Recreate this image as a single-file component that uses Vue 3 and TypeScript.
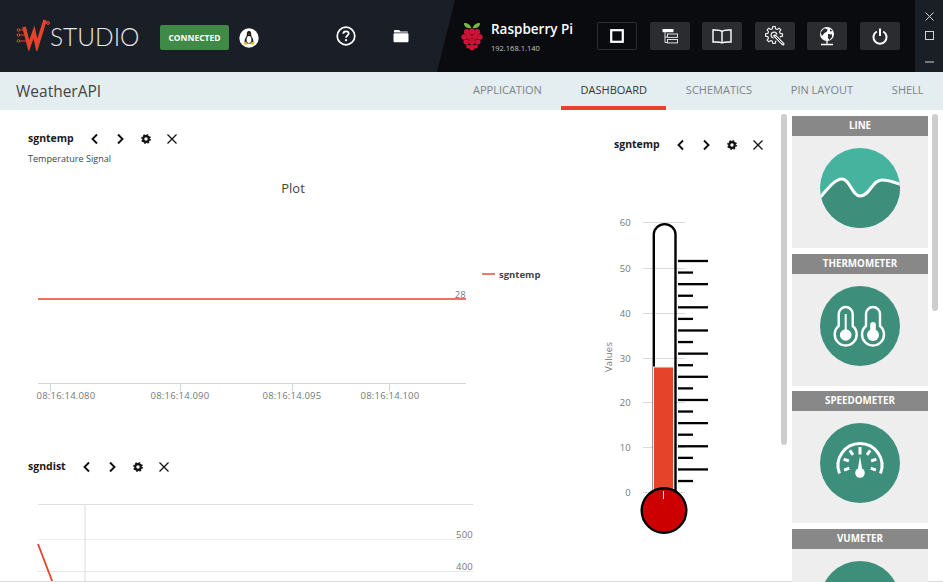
<script setup lang="ts">
// top bar + tabs
const tabs: string[] = ['APPLICATION', 'DASHBOARD', 'SCHEMATICS', 'PIN LAYOUT', 'SHELL']
const activeTab = 'DASHBOARD'

// chart data, coords are page coords (viewBox starts at the svg's page offset)
const timeTicks = [
  { x: 50, tx: 66, label: '08:16:14.080' },
  { x: 180, tx: 180, label: '08:16:14.090' },
  { x: 292, tx: 292, label: '08:16:14.095' },
  { x: 389, tx: 390, label: '08:16:14.100' },
]
const thermoScale = [
  { y: 222, label: '60' },
  { y: 268, label: '50' },
  { y: 313, label: '40' },
  { y: 358, label: '30' },
  { y: 402, label: '20' },
  { y: 447, label: '10' },
  { y: 492, label: '0' },
]
const thermoMarks: { y: number; x2: number }[] = Array.from({ length: 20 }, (_, i) => ({
  y: 261 + i * 11.58,
  x2: i % 2 === 0 ? 708 : 693,
}))

const palette: string[] = ['LINE', 'THERMOMETER', 'SPEEDOMETER', 'VUMETER']
const gaugeTicks: number[] = [-111, -74, -37, 0, 37, 74, 111]

// outline of a cog, used by the settings button
function cogPath(cx: number, cy: number, outer: number, inner: number, teeth: number): string {
  const step = (Math.PI * 2) / teeth
  const pts: string[] = []
  for (let i = 0; i < teeth; i++) {
    const a = i * step
    const offsets: [number, number][] = [
      [-0.32, inner],
      [-0.18, outer],
      [0.18, outer],
      [0.32, inner],
    ]
    for (const [o, r] of offsets) {
      const t = a + o * step
      pts.push(`${(cx + Math.cos(t) * r).toFixed(2)} ${(cy + Math.sin(t) * r).toFixed(2)}`)
    }
  }
  return `M${pts.join('L')}Z`
}
const settingsCog: string = cogPath(9, 9, 8.6, 6.4, 8)
</script>

<template>
  <div class="app">
    <svg class="sprites" width="0" height="0" aria-hidden="true">
      <symbol id="ico-prev" viewBox="0 0 12 12">
        <path d="M8 1.500 3.500 6 8 10.500" fill="none" stroke="#111" stroke-width="1.900" />
      </symbol>
      <symbol id="ico-next" viewBox="0 0 12 12">
        <path d="M4 1.500 8.500 6 4 10.500" fill="none" stroke="#111" stroke-width="1.900" />
      </symbol>
      <symbol id="ico-gear" viewBox="0 0 12 12">
        <circle cx="6" cy="6" r="2.800" fill="none" stroke="#111" stroke-width="2.200" />
        <circle cx="6" cy="6" r="4.200" fill="none" stroke="#111" stroke-width="1.500" stroke-dasharray="1.650 1.650" />
      </symbol>
      <symbol id="ico-close" viewBox="0 0 12 12">
        <path d="M1.500 1.500 10.500 10.500M10.500 1.500 1.500 10.500" fill="none" stroke="#111" stroke-width="1.300" />
      </symbol>
    </svg>

    <header class="topbar">
      <div class="topbar-left">
        <div class="brand">
          <svg class="brand-mark" width="34" height="34" viewBox="0 0 34 34">
            <path d="M8 10 13 29 18 15 21 29 29 3" fill="none" stroke="#e5432a" stroke-width="3.600" />
            <path d="M29 6H33M11 13H3M12 18H3M13 24H3" fill="none" stroke="#e5432a" stroke-width="1" />
            <circle cx="2.500" cy="13" r="1.300" fill="none" stroke="#e5432a" />
            <circle cx="2.500" cy="18" r="1.300" fill="none" stroke="#e5432a" />
            <circle cx="2.500" cy="24" r="1.300" fill="none" stroke="#e5432a" />
            <circle cx="32" cy="6" r="1.500" fill="none" stroke="#e5432a" />
          </svg>
          <span class="brand-name">STUDIO</span>
        </div>
        <span class="status">CONNECTED</span>
        <svg class="os-icon" width="20" height="20" viewBox="0 0 20 20">
          <circle cx="10" cy="10" r="9.700" fill="#fff" />
          <path d="M10 3C8 3 7.800 5 7.800 7 7.800 8.500 5.500 10.500 5.500 13.500L7 15.500H13L14.500 13.500C14.500 10.500 12.200 8.500 12.200 7 12.200 5 12 3 10 3Z" fill="#16181c" />
          <ellipse cx="10" cy="11.500" rx="2.400" ry="3.500" fill="#fff" />
          <path d="M4.500 14.500 7.500 13.500 8 16.500 5.500 16.800ZM15.500 14.500 12.500 13.500 12 16.500 14.500 16.800ZM9 5.800H11L10 6.800Z" fill="#f2b90f" />
        </svg>
        <svg class="help-icon" width="20" height="20" viewBox="0 0 20 20">
          <circle cx="10" cy="10" r="8.800" fill="none" stroke="#fff" stroke-width="1.700" />
          <path d="M7.300 7.800C7.300 6.200 8.500 5.400 10 5.400 11.600 5.400 12.700 6.300 12.700 7.600 12.700 9.500 10 9.500 10 11.700" fill="none" stroke="#fff" stroke-width="1.700" />
          <circle cx="10" cy="14.200" r="1.100" fill="#fff" />
        </svg>
        <svg class="folder-icon" width="16" height="14" viewBox="0 0 16 14">
          <path d="M1 3.500V2C1 1.400 1.400 1 2 1H6L7.500 2.500H14C14.600 2.500 15 2.900 15 3.500Z" fill="#fff" />
          <rect x="0.500" y="4.200" width="15" height="9" rx="1.200" fill="#fff" />
        </svg>
      </div>

      <div class="topbar-right">
        <svg class="board-logo" width="22" height="29" viewBox="0 0 22 29">
          <path d="M10.500 6C8 1 4 .5 3 1.500 3 4.500 6 7 10.500 6ZM11.500 6C14 1 18 .5 19 1.500 19 4.500 16 7 11.500 6Z" fill="#7ab648" />
          <g fill="#d01237">
            <circle cx="11" cy="9.500" r="3" />
            <circle cx="5.800" cy="10" r="2.900" />
            <circle cx="16.200" cy="10" r="2.900" />
            <circle cx="3" cy="15" r="2.700" />
            <circle cx="19" cy="15" r="2.700" />
            <circle cx="8" cy="14.700" r="3" />
            <circle cx="14" cy="14.700" r="3" />
            <circle cx="11" cy="19.800" r="3" />
            <circle cx="5.300" cy="20" r="2.800" />
            <circle cx="16.700" cy="20" r="2.800" />
            <circle cx="11" cy="25.400" r="2.900" />
            <circle cx="7" cy="24.500" r="2" />
            <circle cx="15" cy="24.500" r="2" />
          </g>
        </svg>
        <div class="board-info">
          <span class="board-name">Raspberry Pi</span>
          <span class="board-ip">192.168.1.140</span>
        </div>
        <div class="actions">
          <button type="button" class="action action-stop" aria-label="Stop">
            <svg width="14" height="14" viewBox="0 0 14 14">
              <rect x="1.200" y="1.200" width="11.600" height="11.600" fill="none" stroke="#fff" stroke-width="2.200" />
            </svg>
          </button>
          <button type="button" class="action" aria-label="Tree">
            <svg width="16" height="15" viewBox="0 0 16 15">
              <rect x="0.500" y="0" width="11" height="3.200" fill="#fff" />
              <path d="M3 3V13.500H5M3 8H5" fill="none" stroke="#ddd" />
              <rect x="5.500" y="5" width="10" height="3.400" fill="none" stroke="#ddd" />
              <rect x="5.500" y="10.500" width="10" height="3.400" fill="none" stroke="#ddd" />
            </svg>
          </button>
          <button type="button" class="action" aria-label="Book">
            <svg width="20" height="15" viewBox="0 0 20 15">
              <path d="M10 2.500C8.500 1 5 .8 1 1V13C5 12.800 8.500 13 10 14 11.500 13 15 12.800 19 13V1C15 .8 11.500 1 10 2.500ZM10 2.500V14" fill="none" stroke="#fff" stroke-width="1.400" />
            </svg>
          </button>
          <button type="button" class="action" aria-label="Settings">
            <svg width="20" height="20" viewBox="0 0 20 20">
              <path :d="settingsCog" fill="none" stroke="#eee" stroke-width="1.200" stroke-linejoin="round" />
              <circle cx="9" cy="9" r="2.900" fill="none" stroke="#eee" stroke-width="1.200" />
              <path d="M10 10 17.500 17.500" stroke="#2a2c2f" stroke-width="5.200" />
              <path d="M9.800 9.800 18 18" stroke="#eee" stroke-width="3" stroke-linecap="round" />
              <path d="M10.500 10.500 17.500 17.500" stroke="#2a2c2f" stroke-width="1" />
            </svg>
          </button>
          <button type="button" class="action" aria-label="Network">
            <svg width="18" height="20" viewBox="0 0 18 20">
              <circle cx="9" cy="8" r="7" fill="#fff" />
              <path d="M6 2.500 9.500 3 9 5.500 6.500 7 4 10 2.500 6.500ZM10 8 14 8.500 14 11 11.500 14 10 12ZM12 3 14.500 5 12 5.500Z" fill="#2a2c2f" />
              <path d="M9 15V17.500M3 18.500H15" stroke="#fff" stroke-width="1.400" fill="none" />
            </svg>
          </button>
          <button type="button" class="action" aria-label="Power">
            <svg width="16" height="17" viewBox="0 0 16 17">
              <path d="M4.800 3.500A6.500 6.500 0 1 0 11.200 3.500M8 .5V8" fill="none" stroke="#fff" stroke-width="2" />
            </svg>
          </button>
        </div>
      </div>

      <div class="window-controls">
        <svg width="9" height="9" viewBox="0 0 9 9"><path d="M.5 .5 8.500 8.500M8.500 .5 .5 8.500" stroke="#cfd2d6" fill="none" /></svg>
        <svg width="9" height="9" viewBox="0 0 9 9"><rect x=".5" y=".5" width="8" height="8" stroke="#cfd2d6" fill="none" /></svg>
        <svg width="9" height="9" viewBox="0 0 9 9"><path d="M0 8H9" stroke="#cfd2d6" fill="none" /></svg>
      </div>
    </header>

    <nav class="tabbar">
      <span class="project">WeatherAPI</span>
      <ul class="tabs" role="list">
        <li v-for="tab in tabs" :key="tab" :class="['tab', { active: tab === activeTab }]">{{ tab }}</li>
      </ul>
    </nav>

    <main class="workspace">
      <section class="col-charts">
        <div class="widget-head head-temp">
          <span class="widget-title">sgntemp</span>
          <span class="tool"><svg width="12" height="12"><use href="#ico-prev" /></svg></span>
          <span class="tool"><svg width="12" height="12"><use href="#ico-next" /></svg></span>
          <span class="tool"><svg width="12" height="12"><use href="#ico-gear" /></svg></span>
          <span class="tool"><svg width="12" height="12"><use href="#ico-close" /></svg></span>
        </div>
        <p class="widget-sub">Temperature Signal</p>
        <svg class="plot plot-temp" width="590" height="270" viewBox="0 170 590 270">
          <text x="293" y="193" class="plot-title" text-anchor="middle">Plot</text>
          <line x1="38" y1="299" x2="466" y2="299" stroke="#e5432a" stroke-width="1.600" />
          <text x="466" y="298" class="tick" text-anchor="end">28</text>
          <line x1="482" y1="274" x2="495" y2="274" stroke="#e5432a" stroke-width="1.400" />
          <text x="499" y="277.500" class="legend">sgntemp</text>
          <line x1="38" y1="383.500" x2="466" y2="383.500" stroke="#c9d6e4" />
          <g v-for="t in timeTicks" :key="t.label">
            <line :x1="t.x + 0.5" y1="383" :x2="t.x + 0.5" y2="391" stroke="#c9d6e4" />
            <text :x="t.tx" y="398.500" class="tick" text-anchor="middle">{{ t.label }}</text>
          </g>
        </svg>

        <div class="widget-head head-dist">
          <span class="widget-title">sgndist</span>
          <span class="tool"><svg width="12" height="12"><use href="#ico-prev" /></svg></span>
          <span class="tool"><svg width="12" height="12"><use href="#ico-next" /></svg></span>
          <span class="tool"><svg width="12" height="12"><use href="#ico-gear" /></svg></span>
          <span class="tool"><svg width="12" height="12"><use href="#ico-close" /></svg></span>
        </div>
        <svg class="plot plot-dist" width="590" height="92" viewBox="0 490 590 92">
          <line x1="38" y1="504.500" x2="473" y2="504.500" stroke="#dcdfe3" />
          <line x1="38" y1="539.500" x2="473" y2="539.500" stroke="#eceeef" />
          <line x1="38" y1="571.500" x2="473" y2="571.500" stroke="#e6e8ea" />
          <line x1="85" y1="504" x2="85" y2="582" stroke="#e3e4e6" stroke-width="1.300" />
          <line x1="38" y1="544" x2="52.500" y2="582" stroke="#e5432a" stroke-width="1.800" />
          <text x="473" y="537.500" class="tick" text-anchor="end">500</text>
          <text x="473" y="570" class="tick" text-anchor="end">400</text>
        </svg>
      </section>

      <section class="col-thermo">
        <div class="widget-head head-thermo">
          <span class="widget-title">sgntemp</span>
          <span class="tool"><svg width="12" height="12"><use href="#ico-prev" /></svg></span>
          <span class="tool"><svg width="12" height="12"><use href="#ico-next" /></svg></span>
          <span class="tool"><svg width="12" height="12"><use href="#ico-gear" /></svg></span>
          <span class="tool"><svg width="12" height="12"><use href="#ico-close" /></svg></span>
        </div>
        <svg class="plot plot-thermo" width="190" height="340" viewBox="590 205 190 340">
          <g v-for="s in thermoScale" :key="s.label">
            <line x1="643" :y1="s.y + 0.5" x2="685" :y2="s.y + 0.5" stroke="#dadada" />
            <text x="631" :y="s.y + 3.500" class="tick" text-anchor="end">{{ s.label }}</text>
          </g>
          <text class="tick" transform="translate(612 357) rotate(-90)" text-anchor="middle">Values</text>
          <path d="M653.800 492V234A10.900 10.900 0 0 1 675.500 234V492" fill="none" stroke="#000" stroke-width="2.400" />
          <rect x="653.500" y="367" width="20" height="125" fill="#e5432a" stroke="#f2f2f2" stroke-width="1" />
          <circle cx="664" cy="510.500" r="22.300" fill="#cc0000" stroke="#000" stroke-width="2.400" />
          <line x1="663.500" y1="491" x2="663.500" y2="499" stroke="#eee" />
          <line v-for="m in thermoMarks" :key="m.y" x1="678" :y1="m.y" :x2="m.x2" :y2="m.y" stroke="#000" stroke-width="2.300" />
        </svg>
      </section>

      <div class="scrollbar scroll-dash"></div>

      <aside class="palette">
        <article v-for="item in palette" :key="item" class="card">
          <h3 class="card-head">{{ item }}</h3>
          <div class="card-body">
            <svg width="80" height="80" viewBox="0 0 80 80">
              <defs>
                <clipPath id="disc"><circle cx="40" cy="40" r="40" /></clipPath>
              </defs>
              <template v-if="item === 'LINE'">
                <g clip-path="url(#disc)">
                  <rect width="80" height="80" fill="#45b39d" />
                  <path d="M-2 52C8 40 15 31 22 31 30 31 32 48 40 48 50 48 52 32 62 32 68 32 74 34 82 37V84H-2Z" fill="#3d8f7c" stroke="#fff" stroke-width="3" />
                </g>
              </template>
              <template v-else>
                <circle cx="40" cy="40" r="40" fill="#3d8f7c" />
                <g v-if="item === 'THERMOMETER'">
                  <path d="M18.700 40V28A7 7 0 0 1 32.700 28V40A11 11 0 1 1 18.700 40Z" fill="none" stroke="#fff" stroke-width="2.400" />
                  <circle cx="25.700" cy="49" r="5.800" fill="#fff" />
                  <rect x="24.700" y="28" width="2" height="20" fill="#fff" />
                  <path d="M46 40V28A7 7 0 0 1 60 28V40A11 11 0 1 1 46 40Z" fill="none" stroke="#fff" stroke-width="2.400" />
                  <circle cx="53" cy="49" r="6" fill="#fff" />
                  <rect x="50.200" y="36" width="5.600" height="14" rx="2.800" fill="#fff" />
                </g>
                <g v-else-if="item === 'SPEEDOMETER'">
                  <path d="M19.500 50.500A22 22 0 1 1 60.500 50.500" fill="none" stroke="#fff" stroke-width="3" />
                  <line
                    v-for="a in gaugeTicks"
                    :key="a"
                    x1="40"
                    y1="24"
                    :y2="a === 0 ? 31.500 : 29.500"
                    x2="40"
                    stroke="#fff"
                    stroke-width="3"
                    :transform="`rotate(${a} 40 41)`"
                  />
                  <path d="M40 33 42.300 47H37.700Z" fill="#fff" />
                  <circle cx="40" cy="50" r="4.800" fill="#fff" />
                </g>
              </template>
            </svg>
          </div>
        </article>
      </aside>

      <div class="scrollbar scroll-palette"></div>
    </main>
  </div>
</template>

<style scoped>
.sprites {
  position: absolute;
}

.app {
  width: 943px;
  height: 582px;
  overflow: hidden;
  display: flex;
  flex-direction: column;
  background: #fff;
  font-family: 'Open Sans', 'Noto Sans', sans-serif;
  color: #222;
}

/* top bar */
.topbar {
  flex: 0 0 72px;
  display: flex;
  background: #1a1f27;
}

.topbar-left {
  flex: 0 0 437px;
  display: flex;
  align-items: center;
  padding-left: 16px;
  box-sizing: border-box;
}

.brand {
  display: flex;
  align-items: center;
  width: 144px;
}

.brand-mark {
  margin-top: -4px;
}

.brand-name {
  font-family: Lato, 'Open Sans', sans-serif;
  font-weight: 300;
  font-size: 24.500px;
  color: #e8e8e8;
}

.status {
  width: 69px;
  height: 25px;
  margin-top: 3px;
  display: flex;
  align-items: center;
  justify-content: center;
  background: #3f8a47;
  border-radius: 2px;
  color: #fff;
  font-size: 8.500px;
  font-weight: 700;
}

.os-icon {
  margin: 3px 0 0 10px;
}

.help-icon {
  margin: 0 0 0 77px;
}

.folder-icon {
  margin: 0 0 0 37px;
}

.topbar-right {
  flex: 1;
  display: flex;
  align-items: center;
  padding-left: 24px;
  background: #0a0b0e;
  clip-path: polygon(18px 0, 100% 0, 100% 100%, 0 100%);
}

.board-logo {
  flex: none;
}

.board-info {
  width: 106px;
  margin-left: 8px;
  display: flex;
  flex-direction: column;
}

.board-name {
  color: #fff;
  font-size: 13.500px;
  font-weight: 600;
  line-height: 20px;
}

.board-ip {
  color: #c4c4c4;
  font-size: 7.500px;
  line-height: 12px;
  margin-top: 3px;
}

.actions {
  display: flex;
  gap: 12.600px;
}

.action {
  width: 40px;
  height: 28px;
  padding: 0;
  display: flex;
  align-items: center;
  justify-content: center;
  border: 0;
  border-radius: 2px;
  background: #2a2c2f;
}

.action-stop {
  background: #0a0b0e;
  border: 1px solid #2c2e31;
  box-sizing: border-box;
}

.window-controls {
  flex: 0 0 28px;
  display: flex;
  flex-direction: column;
  align-items: center;
  padding: 12px 0 0;
  box-sizing: border-box;
  gap: 10px;
  background: #1a1f27;
}

.window-controls svg:last-child {
  margin-top: 4px;
}

/* tabs */
.tabbar {
  flex: 0 0 38px;
  display: flex;
  align-items: stretch;
  background: #e4edf0;
}

.project {
  margin-left: 16px;
  align-self: center;
  font-size: 15.500px;
  color: #444;
}

.tabs {
  margin: 0 0 0 auto;
  padding: 0;
  list-style: none;
  display: flex;
}

.tab {
  padding: 1px 19.400px 0;
  display: flex;
  align-items: center;
  font-size: 11px;
  color: #7c8488;
  border-bottom: 4px solid transparent;
  box-sizing: border-box;
}

.tab.active {
  color: #333;
  border-bottom-color: #e8432a;
}

/* canvas */
.workspace {
  flex: 1;
  min-height: 0;
  position: relative;
  display: flex;
  border-bottom: 1px solid #dddddd;
}

.col-charts {
  flex: 0 0 590px;
  overflow: hidden;
}

.col-thermo {
  flex: 0 0 191px;
  overflow: hidden;
}

.plot {
  display: block;
}

.plot-temp {
  margin-top: 4px;
}

.plot-dist {
  margin-top: 15px;
}

.plot-title {
  font-size: 13px;
  fill: #444;
}

.tick {
  font-size: 9.500px;
  fill: #777;
  letter-spacing: 0.2px;
}

.legend {
  font-size: 9.500px;
  font-weight: 700;
  fill: #444;
}

.widget-head {
  height: 16px;
  display: flex;
  align-items: center;
}

.head-temp {
  margin: 21px 0 0 28px;
}

.head-dist {
  margin: 19px 0 0 28px;
}

.head-thermo {
  margin: 27px 0 0 24px;
}

.widget-title {
  margin-right: 8px;
  margin-top: -2px;
  font-size: 10.500px;
  font-weight: 700;
  color: #1a1a1a;
}

.tool {
  width: 25.800px;
  height: 16px;
  display: flex;
  align-items: center;
  justify-content: center;
}

.widget-sub {
  margin: 5px 0 0 28px;
  height: 14px;
  line-height: 14px;
  font-size: 9.100px;
  color: #444;
}

.plot-thermo {
  margin-top: 52px;
}

/* right palette */
.scrollbar {
  flex: none;
  width: 6px;
  margin-top: 4px;
  border-radius: 3px;
  background: #cdcdcd;
}

.scroll-dash {
  height: 331px;
}

.palette {
  flex: 0 0 136px;
  margin: 6px 0 0 5px;
  display: flex;
  flex-direction: column;
  gap: 5.500px;
}

.card {
  flex: 0 0 132px;
  display: flex;
  flex-direction: column;
}

.card-head {
  margin: 0;
  height: 20px;
  line-height: 20px;
  text-align: center;
  background: #888;
  color: #fff;
  font-size: 9.800px;
  font-weight: 700;
}

.card-body {
  flex: 1;
  padding-top: 12px;
  display: flex;
  justify-content: center;
  align-items: flex-start;
  background: #eeeeee;
}

.scroll-palette {
  height: 197px;
  margin-left: 4px;
}
</style>

<style>
html,
body {
  margin: 0;
  background: #fff;
}
</style>
